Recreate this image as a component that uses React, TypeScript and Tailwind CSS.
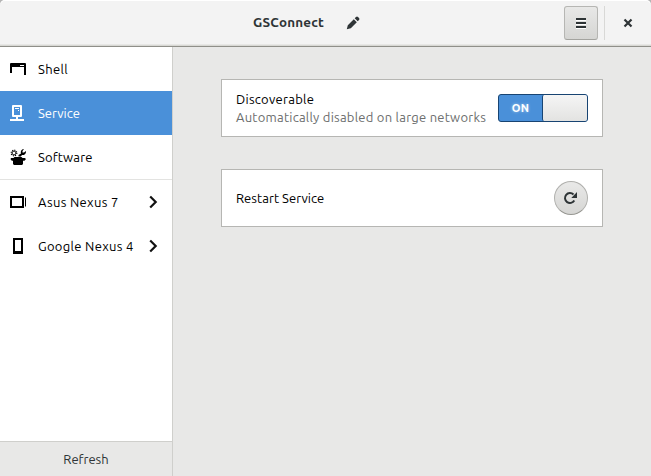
import type { ReactNode } from "react";

const ShellIcon = () => (
  <svg width="16" height="16" viewBox="0 0 16 16" fill="currentColor">
    <path d="M1 2h14a1 1 0 0 1 1 1v11h-2V6H2v6H0V3a1 1 0 0 1 1-1zM10 4v1h4V4z" fillRule="evenodd" />
  </svg>
);

const ServiceIcon = () => (
  <svg width="16" height="16" viewBox="0 0 16 16" fill="currentColor">
    <path fillRule="evenodd" d="M3 0h8a1 1 0 0 1 1 1v10a1 1 0 0 1-1 1H8v2h6v2H0v-2h6v-2H3a1 1 0 0 1-1-1V1a1 1 0 0 1 1-1zM4 2v8h6V2z" />
    <path d="M5 3h4v1H5zM8 5h1v1H8z" />
  </svg>
);

const SoftwareIcon = () => (
  <svg width="16" height="16" viewBox="0 0 16 16" fill="currentColor">
    <circle cx="4" cy="4" r="1.9" fill="none" stroke="currentColor" strokeWidth="0.9" />
    <circle cx="4" cy="4" r="2.8" fill="none" stroke="currentColor" strokeWidth="1.2" strokeDasharray="1.100 1.100" />
    <path d="M8.500 7.500V6L11 4.500C10.200 2 11.600.3 14 0l-1.500 2v1.500H14l2-1.500c.2 2.500-1.200 4.200-4 4L10.800 7.500z" />
    <path d="M1.200 9h2.300L4.500 8h7l1 1h2.300L16 10l-1.500 1.700H13V15l-1 1H4l-1-1v-3.300H1.800L.4 10z" />
  </svg>
);

const TabletIcon = () => (
  <svg width="16" height="16" viewBox="0 0 16 16" fill="currentColor">
    <path fillRule="evenodd" d="M0 2h14v12H0zM2 4v8h10V4zM15 3.500h1v9h-1z" />
  </svg>
);

const PhoneIcon = () => (
  <svg width="16" height="16" viewBox="0 0 16 16" fill="currentColor">
    <path fillRule="evenodd" d="M3 0h10v16H3zM5 2v11h6V2z" />
  </svg>
);

const Chevron = () => (
  <svg width="16" height="16" viewBox="0 0 16 16" fill="none" stroke="#111" strokeWidth="2.2">
    <path d="M5.200 2.500 10.700 8l-5.500 5.500" />
  </svg>
);

function Row({ icon, children, selected, arrow }: { icon: ReactNode; children: ReactNode; selected?: boolean; arrow?: boolean }) {
  return (
    <div className={`flex h-11 shrink-0 items-center pl-[10px] pr-[11px] ${selected ? "bg-[#4a90d9] text-white" : "text-black"}`}>
      {icon}
      <span className="ml-3 flex-1 whitespace-nowrap">{children}</span>
      {arrow && <Chevron />}
    </div>
  );
}

export default function App() {
  return (
    <div className="flex h-[476px] w-[651px] flex-col overflow-hidden bg-[#b5b5b5] font-['Ubuntu','Noto_Sans',sans-serif] text-[13px] leading-[18px] text-black">
      <header className="flex h-[47px] shrink-0 items-center rounded-t-[5px] border-b border-[#8f8f89] bg-[#f3f3f3] pr-[15px] shadow-[inset_0_1px_0_#fff,inset_0_-1px_0_#d8d8d4,inset_0_-2px_0_#e7e7e5]">
        <h1 className="ml-[253px] w-[71px] whitespace-nowrap text-[13.4px] font-bold tracking-[0.2px] text-[#2e3436]">GSConnect</h1>
        <svg className="ml-[21px]" width="16" height="16" viewBox="0 0 16 16" fill="#2e3436">
          <path d="M1.800 14.200l1-4 6-6 3 3-6 6zM9.700 3.300l1.300-1.300q1-1 2 0l1 1q1 1 0 2l-1.300 1.300z" />
        </svg>
        <button className="ml-auto flex h-[34px] w-[34px] items-center justify-center rounded-[3px] border border-[#b6b6b3] border-b-[#a3a39f] bg-linear-to-b from-[#e8e8e7] to-[#d5d5d3]">
          <svg width="16" height="16" viewBox="0 0 16 16">
            <path fill="#fff" d="M3 5h10v1H3zM3 9h10v1H3zM3 13h10v1H3z" />
            <path fill="#2e3436" d="M3 3h10v2H3zM3 7h10v2H3zM3 11h10v2H3z" />
          </svg>
        </button>
        <div className="ml-[6px] h-[34px] w-px bg-[#d8d8d6]" />
        <svg className="ml-[15px]" width="16" height="16" viewBox="0 0 16 16" fill="none" stroke="#2e3436" strokeWidth="2.200">
          <path d="M4.500 4.500l7 7M11.500 4.500l-7 7" />
        </svg>
      </header>
      <div className="flex min-h-0 flex-1">
        <aside className="flex w-[173px] shrink-0 flex-col border-r border-[#cfcfcc] bg-white">
          <Row icon={<ShellIcon />}><span className="tracking-[0.35px]">Shell</span></Row>
          <Row icon={<ServiceIcon />} selected>Service</Row>
          <Row icon={<SoftwareIcon />}><span className="tracking-[0.15px]">Software</span></Row>
          <div className="h-px shrink-0 bg-[#e3e3e1]" />
          <Row icon={<TabletIcon />} arrow><span className="tracking-[0.32px]">Asus Nexus 7</span></Row>
          <Row icon={<PhoneIcon />} arrow><span className="tracking-[0.32px]">Google Nexus 4</span></Row>
          <button className="mt-auto h-[35px] border-t border-[#cfcfcc] bg-[#e8e8e7] text-[#2e3436]">Refresh</button>
        </aside>
        <main className="flex flex-1 flex-col gap-8 bg-[#e8e8e7] pl-12 pt-8">
          <section className="flex h-[58px] w-[382px] items-center border border-[#b6b6b3] bg-white px-[14px]">
            <div className="flex-1 whitespace-nowrap">
              <div className="tracking-[0.28px]">Discoverable</div>
              <div className="tracking-[0.24px] text-[#6c6e6e]">Automatically disabled on large networks</div>
            </div>
            <div className="flex h-7 w-[90px] shrink-0 rounded-[3px] border border-[#184472] bg-[#4a90d9]">
              <span className="flex flex-1 items-center justify-center text-[11px] font-bold tracking-[0.3px] text-white [text-shadow:0_0_3px_#fff8]">ON</span>
              <span className="w-[45px] rounded-[2px] border-l border-[#184472] bg-linear-to-b from-[#f5f5f5] to-[#e3e3e1]" />
            </div>
          </section>
          <section className="flex h-[58px] w-[382px] items-center justify-between border border-[#b6b6b3] bg-white px-[14px]">
            <span className="tracking-[0.05px]">Restart Service</span>
            <button className="flex h-[34px] w-[34px] items-center justify-center rounded-full border border-[#b0b0ad] border-b-[#969691] bg-linear-to-b from-[#e9e9e8] to-[#d6d6d4]">
              <svg width="16" height="16" viewBox="0 0 16 16" fill="none">
                <path d="M11.300 10.500A5 5 0 1 1 10.500 4.430" stroke="#2e3436" strokeWidth="2" />
                <path d="M14 2v6H8.300z" fill="#2e3436" />
              </svg>
            </button>
          </section>
        </main>
      </div>
    </div>
  );
}
